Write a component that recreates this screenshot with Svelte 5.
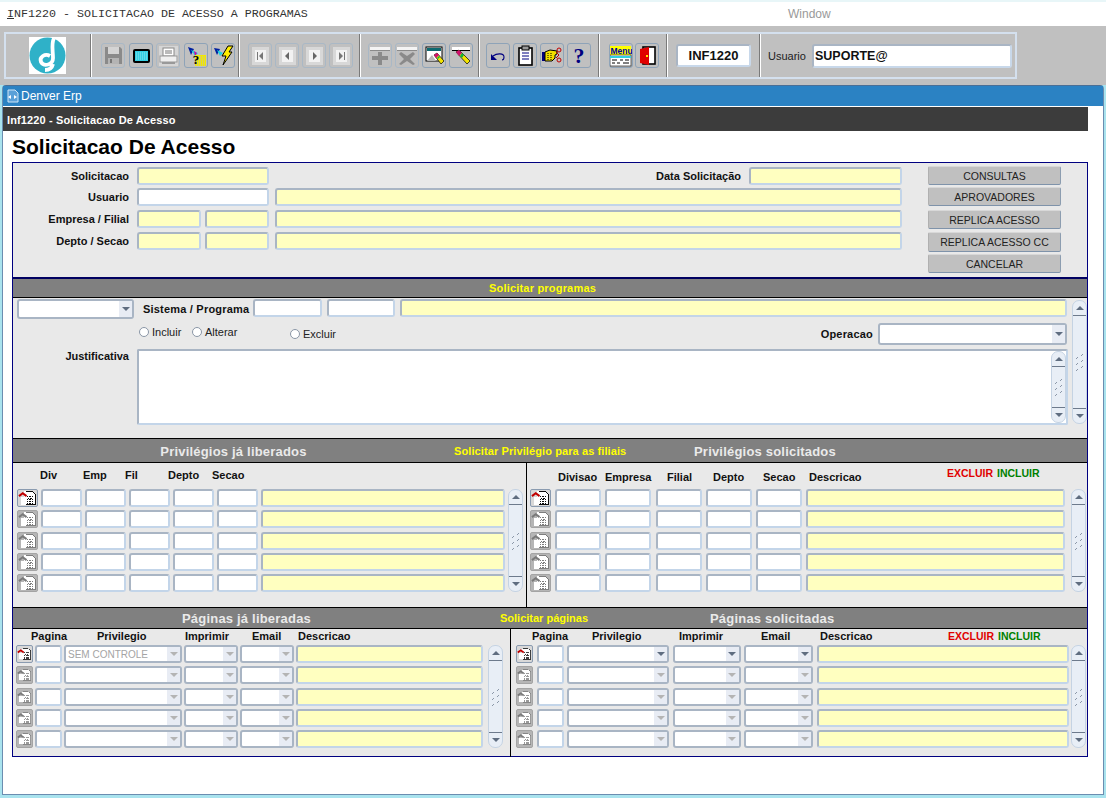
<script>
  const rows = [0, 1, 2, 3, 4];
  const group1 = [["save", true], ["screen", false], ["print", true], ["query", false], ["run", false]];
  const group2 = [["first", true], ["prev", true], ["next", true], ["last", true]];
  const group3 = [["add", true], ["del", true], ["clearform", false], ["clearrec", false]];
  const group4 = [["undo", false], ["clip", false], ["hand", false], ["help", false]];
  const group5 = [["menu", false], ["door", false]];
</script>

{#snippet scrollbar()}
  <div class="scroll">
    <span class="sb-btn top"><i class="tri up"></i></span>
    <span class="sb-mid">
      <svg width="9" height="18" viewBox="0 0 9 18" shape-rendering="crispEdges">
        <path d="M1 5h1M2 4h1M6 2h1M7 1h1M1 11h1M2 10h1M6 8h1M7 7h1M1 17h1M2 16h1M6 14h1M7 13h1" stroke="#8b97a8" stroke-width="1" />
      </svg>
    </span>
    <span class="sb-btn bottom"><i class="tri down"></i></span>
  </div>
{/snippet}

{#snippet select(active = false, text = "")}
  <div class="sel">
    <span class="sel-text">{text}</span>
    <span class="sel-arrow"><i class="tri down" class:dim={!active}></i></span>
  </div>
{/snippet}

{#snippet rowIcon(active = false)}
  <span class="rowbtn" class:on={active}>
    <svg width="20" height="16" viewBox="0 0 20 16" shape-rendering="crispEdges">
      <path d="M3 7h3V1h9l3 3v11H3z" fill="#fff" />
      <path d="M8 1h7l3 3v11H8" fill="none" stroke={active ? "#000" : "#777"} stroke-width="1" />
      <path d="M9 6h7M10 8h6M9 10h7M9 12h7M9 14h7" stroke={active ? "#000" : "#777"} stroke-width="1" stroke-dasharray="2 1" />
      <path d="M1 6l4-3 4 3" fill="none" stroke={active ? "#c00000" : "#7a7a7a"} stroke-width="2.2" shape-rendering="auto" />
    </svg>
  </span>
{/snippet}

{#snippet tool(name, off)}
  <span class="tool" class:off>
    <svg width="22" height="23" viewBox="0 0 22 23">
      {#if name === "save"}
        <path d="M3 3h15l2 2v15H3z" fill="#8a8a8a" />
        <rect x="6" y="3" width="11" height="7" fill="#d4d4d4" />
        <rect x="6" y="14" width="11" height="6" fill="#b4b4b4" />
        <rect x="8" y="15" width="2" height="4" fill="#777" />
      {:else if name === "screen"}
        <rect x="3" y="5" width="17" height="14" rx="2" fill="#000" />
        <rect x="5" y="7" width="13" height="10" fill="#35cfe3" />
        <path d="M6 9h11M6 11h11M6 13h11M6 15h11" stroke="#8fe6ef" stroke-dasharray="1 1" />
      {:else if name === "print"}
        <rect x="2" y="2" width="19" height="20" fill="#d6d6d6" />
        <rect x="6" y="4" width="11" height="8" fill="#fff" stroke="#888" />
        <path d="M8 7h7M8 9h7" stroke="#777" />
        <rect x="3" y="12" width="17" height="6" fill="#f0f0f0" stroke="#999" />
        <rect x="5" y="18" width="13" height="2" fill="#999" />
      {:else if name === "query"}
        <path d="M3 3l6 2-3 6z" fill="#0020a0" />
        <path d="M6 6l7 3-3 3z" fill="#19d3e3" />
        <path d="M9 7l3 2-2 3z" fill="#d000a0" />
        <rect x="10" y="11" width="11" height="11" fill="#f2e800" />
        <path d="M11 13h9M11 15h9M11 17h9M11 19h9M11 21h9" stroke="#b9b9b9" stroke-dasharray="1 1" />
        <text x="11" y="20" class="glyph">?</text>
      {:else if name === "run"}
        <path d="M2 4l6 1-3 6z" fill="#0020a0" />
        <path d="M5 6l6 3-3 3z" fill="#19d3e3" />
        <path d="M16 2h5l-4 6h3l-9 13 3-9H10z" fill="#ffee00" stroke="#000" stroke-width="1" />
      {:else if name === "first" || name === "prev" || name === "next" || name === "last"}
        <rect x="3" y="3" width="17" height="18" fill="#d8d8d8" />
        <rect x="6" y="6" width="11" height="12" fill="#f2f2f2" />
        {#if name === "first"}
          <path d="M8 8h1v8H8zM14 8v8l-4-4z" fill="#777" />
        {:else if name === "prev"}
          <path d="M13 8v8l-4-4z" fill="#666" />
        {:else if name === "next"}
          <path d="M10 8v8l4-4z" fill="#666" />
        {:else}
          <path d="M14 8h1v8h-1zM9 8v8l4-4z" fill="#777" />
        {/if}
      {:else if name === "add"}
        <rect x="1" y="3" width="20" height="3" fill="#f4f4f4" />
        <rect x="1" y="6" width="20" height="1" fill="#8a8a8a" />
        <path d="M9 8h4v4h6v4h-6v5H9v-5H3v-4h6z" fill="#8a8a8a" />
      {:else if name === "del"}
        <rect x="1" y="3" width="20" height="3" fill="#f4f4f4" />
        <rect x="1" y="6" width="20" height="1" fill="#8a8a8a" />
        <path d="M5 8l6 4 6-4 2 2-5 5 5 5-2 1-6-4-6 4-2-1 5-5-5-5z" fill="#8a8a8a" />
      {:else if name === "clearform"}
        <rect x="3" y="3" width="16" height="14" fill="#fff" stroke="#000" />
        <rect x="4" y="4" width="14" height="3" fill="#0d6a70" />
        <path d="M4 17l5-6 4 6z" fill="#b8b8b8" />
        <path d="M11 11l3-2 7 8-3 3z" fill="#f3e400" stroke="#000" stroke-width=".7" />
        <path d="M11 11l3-2 2 2-3 3z" fill="#d01070" />
        <path d="M14 14l2-2 1 1-2 2z" fill="#10b040" />
      {:else if name === "clearrec"}
        <rect x="2" y="3" width="18" height="3" fill="#fff" />
        <rect x="2" y="6" width="18" height="1" fill="#000" />
        <path d="M6 8l3-2 11 11-3 3z" fill="#f3e400" stroke="#000" stroke-width=".7" />
        <path d="M6 8l3-2 3 3-3 3z" fill="#d01070" />
        <path d="M10 12l2-3 2 2-2 3z" fill="#10b040" />
      {:else if name === "undo"}
        <path d="M6 12c4-3 11-3 11 1 0 2-1 3-2 3" fill="none" stroke="#000080" stroke-width="1.1" />
        <path d="M4 10v6h6z" fill="#000080" />
      {:else if name === "clip"}
        <rect x="5" y="4" width="13" height="17" fill="#fff" stroke="#000" stroke-width="1.6" />
        <rect x="8" y="2" width="7" height="4" fill="#9a9a9a" stroke="#000" />
        <path d="M8 9h7M8 12h7M8 15h7" stroke="#000080" />
      {:else if name === "hand"}
        <path d="M1 8h3v9H1z" fill="#000080" />
        <path d="M4 8l5-2 7 1v3l-2 1v3l-3 3H4z" fill="#f2e000" stroke="#000" />
        <path d="M7 9v7M10 9v7" stroke="#000" stroke-dasharray="1 1" />
        <circle cx="18" cy="6" r="2" fill="none" stroke="#c00000" />
        <circle cx="18" cy="16" r="2" fill="none" stroke="#c00000" />
        <path d="M15 8l3 3-3 3" fill="none" stroke="#c00000" />
      {:else if name === "help"}
        <text x="11" y="19" class="glyph big">?</text>
      {:else if name === "menu"}
        <rect x="0" y="2" width="21" height="9" fill="#ffff00" />
        <text x="0.5" y="10" class="glyph tiny">Menu</text>
        <rect x="0" y="11" width="21" height="11" fill="#fff" stroke="#000" stroke-width=".6" />
        <rect x="0" y="12" width="21" height="2" fill="#2fd0e0" />
        <path d="M2 16h5M10 16h3M15 16h4M2 19h3M7 19h3M13 19h6" stroke="#000" />
      {:else if name === "door"}
        <rect x="7" y="3" width="12" height="17" fill="#fff" stroke="#000" stroke-width="1.6" />
        <path d="M4 5l9-2v18l-9-2z" fill="#e00000" />
        <rect x="10" y="11" width="2" height="2" fill="#ffee00" />
      {/if}
    </svg>
  </span>
{/snippet}

{#snippet toolGroup(items, cls)}
  <div class="group {cls}">
    {#each items as [name, off]}
      {@render tool(name, off)}
    {/each}
  </div>
{/snippet}

<div class="screen">
  <div class="titlebar">
    <span class="app-title"><u>I</u>NF1220 - SOLICITACAO DE ACESSO A PROGRAMAS</span>
    <span class="win-menu">Window</span>
  </div>

  <div class="toolband">
    <div class="toolbar">
      <div class="group g-logo">
        <svg class="logo" width="37" height="37" viewBox="0 0 37 37">
          <rect width="37" height="37" fill="#fff" />
          <circle cx="18.5" cy="18.5" r="18" fill="#2fb1c8" />
          <path d="M25 1c-3 6-1 13-1 20 0 7-9 9-12 4-2-5 4-9 9-6M24 27c-1 4-4 6-8 6" fill="none" stroke="#fff" stroke-width="3.8" />
        </svg>
      </div>
      {@render toolGroup(group1, "g1")}
      {@render toolGroup(group2, "g2")}
      {@render toolGroup(group3, "g3")}
      {@render toolGroup(group4, "g4")}
      {@render toolGroup(group5, "g5")}
      <div class="group g6"><span class="code-box">INF1220</span></div>
      <div class="group g7">
        <span class="usr-label">Usuario</span>
        <span class="usr-box">SUPORTE@</span>
      </div>
    </div>
  </div>

  <section class="window">
    <div class="win-head">
      <svg width="14" height="14" viewBox="0 0 14 14">
        <path d="M2 1h7l3 3v9H2z" fill="#5aa0d8" stroke="#cfe4f5" />
        <path d="M2 8l3-2v4zM11 8L8 6v4z" fill="#fff" />
      </svg>
      <span>Denver Erp</span>
    </div>
    <div class="sub-head">Inf1220 - Solicitacao De Acesso</div>
    <h1>Solicitacao De Acesso</h1>

    <div class="panel">
      <div class="top-form">
        <div class="fields">
          <label>Solicitacao</label>
          <span class="f y span2"></span>
          <div class="data-cell"><label>Data Solicitação</label><span class="f y data"></span></div>

          <label>Usuario</label>
          <span class="f span2"></span>
          <span class="f y wide"></span>

          <label>Empresa / Filial</label>
          <span class="f y"></span>
          <span class="f y"></span>
          <span class="f y wide"></span>

          <label>Depto / Secao</label>
          <span class="f y"></span>
          <span class="f y"></span>
          <span class="f y wide"></span>
        </div>
        <div class="actions">
          <button class="b1">CONSULTAS</button>
          <button>APROVADORES</button>
          <button class="b3">REPLICA ACESSO</button>
          <button class="b4">REPLICA ACESSO CC</button>
          <button>CANCELAR</button>
        </div>
      </div>

      <div class="bar bar1"><span class="yellow">Solicitar programas</span></div>

      <div class="program">
        <div class="prog-main">
          <div class="prog-row1">
            <div class="w-sel1">{@render select(true)}</div>
            <label class="sis">Sistema / Programa</label>
            <span class="f p1"></span>
            <span class="f p2"></span>
            <span class="f y grow"></span>
          </div>
          <div class="prog-row2">
            <span class="radio r1"><i></i>Incluir</span>
            <span class="radio r2"><i></i>Alterar</span>
            <span class="radio r3"><i></i>Excluir</span>
            <label class="oper">Operacao</label>
            <div class="w-sel2">{@render select(true)}</div>
          </div>
          <div class="prog-row3">
            <label>Justificativa</label>
            <div class="textarea">{@render scrollbar()}</div>
          </div>
        </div>
        <div class="outer-scroll">{@render scrollbar()}</div>
      </div>

      <div class="bar bar2">
        <strong class="c1">Privilégios já liberados</strong>
        <span class="yellow big">Solicitar Privilégio para as filiais</span>
        <strong class="c3">Privilégios solicitados</strong>
      </div>

      <div class="split privs">
        <div class="side left-priv">
          <div class="head h-pl"><b>Div</b><b>Emp</b><b>Fil</b><b>Depto</b><b>Secao</b></div>
          <div class="body">
            <div class="grid pl">
              {#each rows as r}
                {@render rowIcon(r === 0)}
                <span class="f"></span><span class="f"></span><span class="f"></span><span class="f"></span><span class="f"></span>
                <span class="f y"></span>
              {/each}
            </div>
            {@render scrollbar()}
          </div>
        </div>
        <div class="side right-priv">
          <div class="head h-pr">
            <b>Divisao</b><b>Empresa</b><b>Filial</b><b>Depto</b><b>Secao</b><b>Descricao</b>
            <b class="red">EXCLUIR</b><b class="green">INCLUIR</b>
          </div>
          <div class="body">
            <div class="grid pr">
              {#each rows as r}
                {@render rowIcon(r === 0)}
                <span class="f"></span><span class="f"></span><span class="f"></span><span class="f"></span><span class="f"></span>
                <span class="f y"></span>
              {/each}
            </div>
            {@render scrollbar()}
          </div>
        </div>
      </div>

      <div class="bar bar3">
        <strong class="c1">Páginas já liberadas</strong>
        <span class="yellow">Solicitar páginas</span>
        <strong class="c3">Páginas solicitadas</strong>
      </div>

      <div class="split pages">
        <div class="side left-page">
          <div class="head h-gl"><b>Pagina</b><b>Privilegio</b><b>Imprimir</b><b>Email</b><b>Descricao</b></div>
          <div class="body">
            <div class="grid gl">
              {#each rows as r}
                {@render rowIcon(r === 0)}
                <span class="f"></span>
                {@render select(false, r === 0 ? "SEM CONTROLE" : "")}
                {@render select()}
                {@render select()}
                <span class="f y"></span>
              {/each}
            </div>
            {@render scrollbar()}
          </div>
        </div>
        <div class="side right-page">
          <div class="head h-gr">
            <b>Pagina</b><b>Privilegio</b><b>Imprimir</b><b>Email</b><b>Descricao</b>
            <b class="red">EXCLUIR</b><b class="green">INCLUIR</b>
          </div>
          <div class="body">
            <div class="grid gr">
              {#each rows as r}
                {@render rowIcon(r === 0)}
                <span class="f"></span>
                {@render select(r === 0)}
                {@render select(r === 0)}
                {@render select(r === 0)}
                <span class="f y"></span>
              {/each}
            </div>
            {@render scrollbar()}
          </div>
        </div>
      </div>
    </div>
  </section>
</div>

<style>
  :global(body) {
    margin: 0;
    background: #a9e3ee;
  }
  .screen {
    width: 1106px;
    height: 798px;
    overflow: hidden;
    font-family: "Liberation Sans", Arial, sans-serif;
    font-size: 11px;
    color: #111;
    background: #a9e3ee;
  }
  .titlebar {
    height: 24px;
    margin-top: 2px;
    background: #fff;
    display: flex;
    align-items: center;
    box-shadow: 0 -2px 0 #e8f6f8;
  }
  .app-title {
    font-family: "Liberation Mono", monospace;
    font-size: 11.67px;
    color: #333;
    margin-left: 7px;
    width: 781px;
  }
  .win-menu {
    font-size: 12px;
    color: #999;
  }
  .toolband {
    height: 59px;
    box-sizing: border-box;
    background: #c0c0c0;
    padding: 6px 0 0 4px;
  }
  .toolbar {
    width: 1013px;
    height: 47px;
    box-sizing: border-box;
    border: 2px solid #d4e0ee;
    display: flex;
  }
  .group {
    box-sizing: border-box;
    height: 100%;
    display: flex;
    align-items: center;
    gap: 3px;
    padding-left: 7px;
    border-right: 1px solid #fff;
    box-shadow: inset -1px 0 0 #7a7a7a;
  }
  .g-logo { width: 86px; padding-left: 23px; }
  .g1 { width: 148px; padding-left: 9px; gap: 3.5px; }
  .g2 { width: 121px; padding-left: 8px; }
  .g3 { width: 119px; padding-left: 7px; }
  .g4 { width: 120px; padding-left: 6px; }
  .g5 { width: 68px; padding-left: 9px; gap: 2px; }
  .g6 { width: 93px; padding-left: 8px; }
  .g7 { flex: 1; border-right: 0; box-shadow: none; padding-left: 7px; gap: 7px; }
  .logo { display: block; }
  .tool {
    width: 24px;
    height: 25px;
    box-sizing: border-box;
    border: 1px solid #8ea3b8;
    border-radius: 3px;
    display: flex;
    align-items: center;
    justify-content: center;
    background: #c0c0c0;
  }
  .tool.off {
    border-color: #a9b8c6;
  }
  .glyph {
    font-family: "Liberation Serif", serif;
    font-weight: 700;
    font-size: 13px;
    fill: #000;
    text-anchor: middle;
  }
  .glyph.big {
    font-size: 22px;
    fill: #000080;
  }
  .glyph.tiny {
    font-family: "Liberation Sans", sans-serif;
    font-size: 8.5px;
    fill: #0000a0;
    text-anchor: start;
  }
  .code-box,
  .usr-box {
    box-sizing: border-box;
    height: 23px;
    background: #fff;
    border: 2px solid;
    border-color: #a9b5c4 #c8d8ea #c8d8ea #a9b5c4;
    border-radius: 3px;
    display: flex;
    align-items: center;
    font-weight: 700;
  }
  .code-box {
    width: 75px;
    justify-content: center;
    font-size: 13px;
  }
  .usr-box {
    width: 200px;
    height: 24px;
    padding-left: 1px;
    font-size: 12.5px;
  }
  .usr-label {
    width: 37px;
    color: #222;
  }

  .window {
    margin: 0 2px;
    height: 710px;
    box-sizing: border-box;
    background: #fff;
    border: 1px solid #6b8db0;
    border-top: 1px solid #4a6f96;
    border-radius: 4px 4px 0 0;
  }
  .win-head {
    height: 20px;
    background: #2b82c3;
    color: #fff;
    font-size: 12px;
    display: flex;
    align-items: center;
    gap: 1px;
    padding-left: 3px;
  }
  .sub-head {
    box-sizing: border-box;
    height: 24px;
    width: 1085px;
    margin-top: 1px;
    background: #3c3c3c;
    color: #fff;
    font-weight: 700;
    font-size: 11px;
    letter-spacing: 0.13px;
    display: flex;
    align-items: center;
    padding: 1px 0 0 4px;
  }
  h1 {
    margin: 0;
    height: 31px;
    padding-left: 9px;
    box-sizing: border-box;
    font-size: 21px;
    line-height: 31px;
    font-weight: 700;
    color: #000;
  }
  .panel {
    width: 1076px;
    margin-left: 9px;
    box-sizing: border-box;
    border: 1px solid #000080;
    background: #e9e9e9;
    height: 595px;
  }
  label,
  .head b {
    font-weight: 700;
    font-size: 11px;
    color: #111;
  }

  .f {
    display: block;
    box-sizing: border-box;
    height: 18px;
    background: #fff;
    border: 2px solid;
    border-color: #a9b5c4 #c3d5e9 #c3d5e9 #a9b5c4;
    border-radius: 3px;
    min-width: 0;
  }
  .f.y {
    background: #ffffc0;
  }

  .top-form {
    height: 114px;
    box-sizing: border-box;
    padding-top: 4px;
    display: flex;
  }
  .fields {
    display: grid;
    grid-template-columns: 120px 64px 64px 629px;
    grid-template-rows: 21px 22px 22px 18px;
    column-gap: 4px;
    align-items: start;
    height: 90px;
    width: 889px;
  }
  .fields > label {
    text-align: right;
    line-height: 18px;
    padding-right: 4px;
  }
  .span2 {
    grid-column: span 2;
  }
  .wide {
    margin-left: 2px;
  }
  .data-cell {
    display: flex;
    justify-content: flex-end;
    align-items: center;
    gap: 8px;
  }
  .f.data {
    width: 153px;
  }
  .actions {
    margin-left: 26px;
    width: 133px;
    display: flex;
    flex-direction: column;
    margin-top: -1px;
  }
  .actions button {
    height: 19px;
    margin: 0 0 3px;
    padding: 0;
    font: 400 10.5px "Liberation Sans", Arial, sans-serif;
    color: #222;
    background: #c0c0c0;
    border: 1px solid;
    border-color: #d8d8d8 #8c9db0 #7f93aa #b0b0b0;
    border-radius: 2px;
  }
  .actions .b1 {
    margin-bottom: 2px;
  }
  .actions .b3 {
    margin-top: 1px;
  }
  .actions .b4 {
    height: 20px;
    margin-bottom: 2px;
  }

  .bar {
    box-sizing: border-box;
    background: #808080;
    border-top: 1px solid #000;
    border-bottom: 1px solid #000;
    display: flex;
    align-items: center;
    color: #eee;
  }
  .bar strong {
    font-size: 13px;
    letter-spacing: 0.2px;
    font-weight: 700;
    color: #eaeaea;
    padding-top: 1px;
  }
  .yellow {
    color: #ffff00;
    font-weight: 700;
    font-size: 11px;
  }
  .yellow.big {
    letter-spacing: 0.1px;
  }
  .bar1 {
    height: 21px;
    border-top: 2px solid #000060;
    justify-content: center;
    padding-right: 15px;
  }
  .bar1 .yellow {
    letter-spacing: 0.2px;
  }
  .bar2 {
    height: 25px;
  }
  .bar2 .c1 { width: 441px; text-align: center; }
  .bar2 .big { width: 240px; }
  .bar3 {
    height: 22px;
  }
  .bar3 .c1 { width: 467px; text-align: center; }
  .bar3 .yellow { width: 230px; padding-left: 20px; box-sizing: border-box; }

  .program {
    height: 140px;
    box-sizing: border-box;
    padding: 1px 0 0 4px;
    display: flex;
  }
  .prog-main {
    width: 1050px;
    display: flex;
    flex-direction: column;
    gap: 4px;
  }
  .prog-row1 {
    display: flex;
    height: 20px;
    align-items: flex-start;
  }
  .w-sel1 { width: 117px; height: 20px; display: grid; }
  .w-sel2 { width: 189px; height: 22px; display: grid; margin-left: 5px; }
  .w-sel1 .sel,
  .w-sel2 .sel { height: 100%; }
  .sis {
    margin: 0 3px 0 9px;
    width: 107px;
    line-height: 20px;
    white-space: nowrap;
    letter-spacing: 0.2px;
  }
  .p1 { width: 69px; margin-right: 5px; }
  .p2 { width: 68px; margin-right: 5px; }
  .grow { flex: 1; }
  .prog-row2 {
    height: 22px;
    display: flex;
    align-items: center;
    padding-left: 122px;
  }
  .radio {
    display: flex;
    align-items: center;
    gap: 3px;
    color: #222;
    position: relative;
    top: -2px;
  }
  .radio i {
    width: 10px;
    height: 10px;
    box-sizing: border-box;
    border: 1px solid #8a96a6;
    border-radius: 50%;
    background: #fff;
  }
  .r1 { width: 53px; }
  .r2 { width: 98px; }
  .r3 { top: 0; }
  .oper { margin-left: auto; letter-spacing: 0.2px; }
  .prog-row3 {
    display: flex;
    height: 76px;
  }
  .prog-row3 label {
    width: 112px;
    text-align: right;
    padding-top: 1px;
    margin-right: 8px;
  }
  .textarea {
    flex: 1;
    background: #fff;
    border: 2px solid;
    border-color: #a9b5c4 #c3d5e9 #c3d5e9 #a9b5c4;
    border-radius: 2px;
    display: flex;
    justify-content: flex-end;
    margin-right: -1px;
  }
  .outer-scroll {
    margin: 1px 0 0 5px;
    height: 124px;
    display: flex;
  }

  .scroll {
    width: 15px;
    box-sizing: border-box;
    background: #e8eef6;
    border: 1px solid #c5d3e3;
    border-radius: 7px;
    display: flex;
    flex-direction: column;
    flex-shrink: 0;
  }
  .sb-btn {
    height: 14px;
    display: flex;
    align-items: center;
    justify-content: center;
    flex-shrink: 0;
  }
  .sb-btn.top { border-bottom: 1px solid #6d7a8c; }
  .sb-btn.bottom { border-top: 1px solid #6d7a8c; }
  .sb-mid {
    flex: 1;
    display: flex;
    align-items: center;
    justify-content: center;
  }
  .tri {
    display: block;
    width: 0;
    height: 0;
    border-left: 4px solid transparent;
    border-right: 4px solid transparent;
  }
  .tri.up { border-bottom: 4px solid #5f6d80; }
  .tri.down { border-top: 4px solid #5f6d80; }
  .tri.down.dim { border-top-color: #b4b4b4; }

  .sel {
    box-sizing: border-box;
    height: 18px;
    background: #fff;
    border: 2px solid #a9b5c4;
    border-radius: 3px;
    display: flex;
    min-width: 0;
  }
  .sel-text {
    flex: 1;
    font-size: 10px;
    line-height: 15px;
    color: #a4a4a4;
    padding-left: 2px;
    white-space: nowrap;
    overflow: hidden;
  }
  .sel-arrow {
    width: 13px;
    background: #e8ecf4;
    display: flex;
    align-items: center;
    justify-content: center;
  }

  .split {
    display: flex;
  }
  .privs { height: 144px; }
  .pages { height: 126px; }
  .side {
    box-sizing: border-box;
  }
  .left-priv {
    width: 514px;
    border-right: 1px solid #000;
    padding-left: 4px;
  }
  .right-priv {
    flex: 1;
    padding-left: 3px;
  }
  .left-page {
    width: 497px;
    padding-left: 3px;
  }
  .right-page {
    flex: 1;
    border-left: 1px solid #000;
    padding-left: 5px;
    height: 128px;
  }
  .head {
    display: grid;
    align-items: center;
    box-sizing: border-box;
  }
  .privs .head { height: 26px; }
  .pages .head { height: 16px; padding-bottom: 2px; }
  .h-pl { grid-template-columns: 43px 42px 43px 44px auto; padding: 0 0 2px 23px; }
  .h-pr { grid-template-columns: 47px 62px 46px 50px 46px 138px 50px auto; padding: 2px 0 0 28px; }
  .h-gl { grid-template-columns: 66px 88px 67px 46px auto; padding-left: 15px; }
  .h-gr { grid-template-columns: 60px 87px 82px 59px 128px 50px auto; padding-left: 16px; }
  .head .red { color: #e00000; font-size: 10.5px; }
  .head .green { color: #008000; font-size: 10.5px; }
  .h-pr .red,
  .h-pr .green { position: relative; top: -4px; }
  .body {
    display: flex;
    align-items: stretch;
  }
  .grid {
    display: grid;
    grid-auto-rows: 18px;
    row-gap: 3.3px;
    align-items: stretch;
  }
  .pl {
    grid-template-columns: 21px repeat(5, 41px) 244px;
    column-gap: 3px;
    margin-right: 3px;
  }
  .pr {
    grid-template-columns: 21px repeat(5, 46px) 259px;
    column-gap: 4.2px;
    margin-right: 6px;
  }
  .gl {
    grid-template-columns: 17px 27px 118px 54px 54px 187px;
    column-gap: 2px;
    margin-right: 5px;
  }
  .gr {
    grid-template-columns: 17px 27px 102px 68px 69px 252.5px;
    column-gap: 3.5px;
    margin-right: 2px;
  }
  .rowbtn {
    box-sizing: border-box;
    background: #b5b5b5;
    border: 1px solid #a4a4a4;
    border-radius: 2px;
    display: flex;
    align-items: center;
    justify-content: center;
    overflow: hidden;
  }
  .rowbtn.on {
    background: #d8d8d8;
    border-color: #8a9bb0;
  }
</style>
